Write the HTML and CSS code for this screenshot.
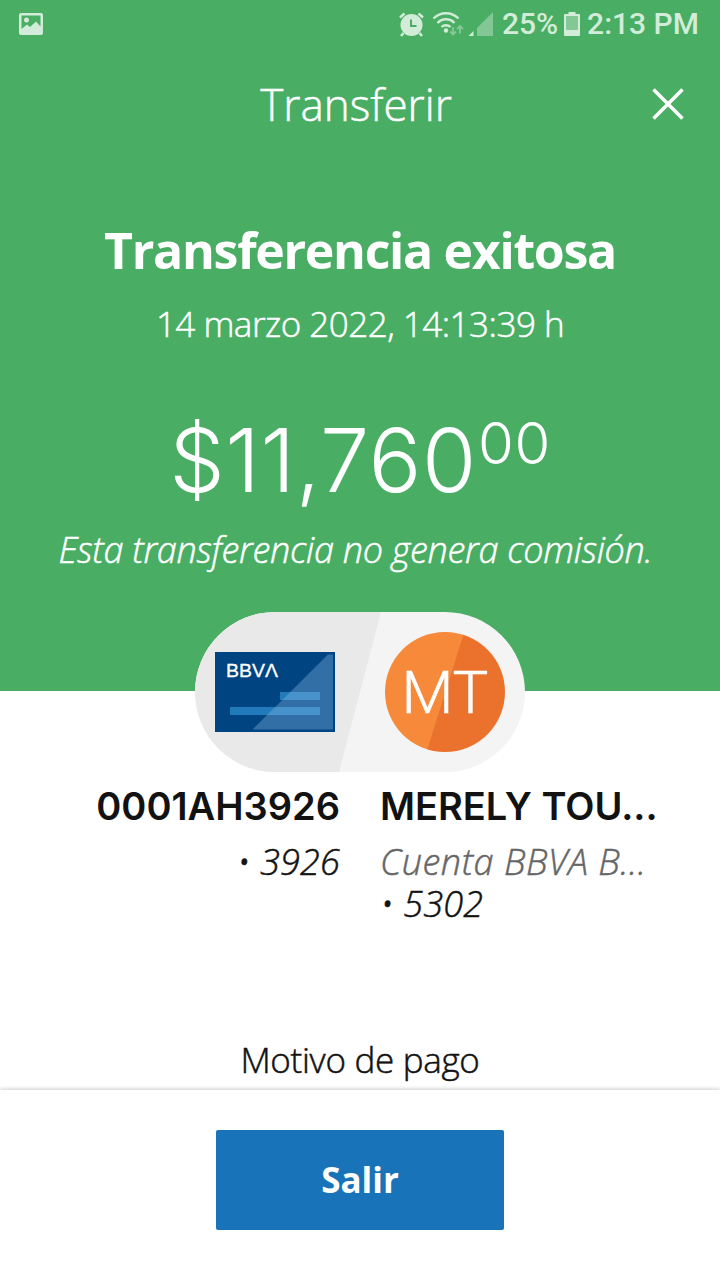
FILE: index.html
```html
<!DOCTYPE html>
<html lang="es">
  <head>
    <meta charset="UTF-8" />
    <meta name="viewport" content="width=device-width, initial-scale=1.0" />
    <title>Transferir</title>
    <link rel="stylesheet" href="styles.css">
  </head>
  <body>
    <div class="hero">
      <div class="status">
        <svg class="icon-picture" width="26" height="24" viewBox="0 0 26 24">
          <path fill-rule="evenodd" d="M2 1h20a2 2 0 0 1 2 2v18a2 2 0 0 1-2 2H2a2 2 0 0 1-2-2V3a2 2 0 0 1 2-2zM2.500 3.500v13.500l5.500-4.500 3 2.500 6-5.500 4.500 5V3.500z" />
          <circle cx="7.500" cy="8" r="2.500" />
        </svg>
        <div class="status-right">
          <svg class="icon-alarm" width="25" height="25" viewBox="0 0 25 25">
            <circle cx="12.500" cy="13" r="11" />
            <path class="cut" d="M12 7.500v6.500h5.500" />
            <path class="line" d="M1 5.500l4.500-4M24 5.500l-4.500-4M4.500 21l-2.500 3M20.500 21l2.500 3" />
          </svg>
          <svg class="icon-wifi" width="33" height="26" viewBox="0 0 33 26">
            <path class="arc" d="M1.500 7.500a17.500 17.500 0 0 1 25 0M5.500 12a11.500 11.500 0 0 1 17 0M9.500 16a6.500 6.500 0 0 1 9 0" />
            <circle cx="14" cy="19.500" r="2.200" />
            <path class="arrows" d="M21 16v7.500M18 20.500l3 3 3-3M28 22.500v-7.500M25 18l3-3 3 3" />
          </svg>
          <svg class="icon-signal" width="25" height="25" viewBox="0 0 25 25">
            <path class="faded" d="M9 24V16L25 0v24z" />
            <path d="M.5 24l5-5v5z" />
          </svg>
          <span class="battery-text">25%</span>
          <svg class="icon-battery" width="16" height="24" viewBox="0 0 16 24">
            <path class="faded" d="M2 4h12v14H2z" />
            <path fill-rule="evenodd" d="M4.500 0h7v2H15a1 1 0 0 1 1 1v20a1 1 0 0 1-1 1H1a1 1 0 0 1-1-1V3a1 1 0 0 1 1-1h3.500zM2 4v14h12V4z" />
          </svg>
          <span class="clock">2:13 PM</span>
        </div>
      </div>
      <div class="header">
        <span class="header-title">Transferir</span>
        <svg class="close" width="32" height="32" viewBox="0 0 32 32">
          <path d="M1.500 1.500l29 29M30.500 1.500l-29 29" />
        </svg>
      </div>
      <h1 class="title">Transferencia exitosa</h1>
      <p class="date">14 marzo 2022, 14:13:39 h</p>
      <div class="amount"><span class="amount-whole">$11,760</span><span class="cents">00</span></div>
      <p class="fee">Esta transferencia no genera comisión.</p>
    </div>

    <div class="pill">
      <svg class="card" width="120" height="80" viewBox="0 0 120 80">
        <rect width="120" height="80" fill="#004481" />
        <path d="M65 40h40v8H65zM15 55h90v8H15z" fill="#237aba" />
        <path d="M113 2.500h5v75H37.500z" fill="#89bde8" fill-opacity="0.36" />
        <text class="card-logo" x="11" y="25" textLength="52" lengthAdjust="spacingAndGlyphs">BBVΛ</text>
      </svg>
      <div class="avatar"><span class="initials">MT</span></div>
    </div>

    <div class="accounts">
      <div class="from">
        <div class="name name-from">0001AH3926</div>
        <div class="detail">• 3926</div>
      </div>
      <div class="to">
        <div class="name name-to">MERELY TOU...</div>
        <div class="detail bank">Cuenta BBVA B...</div>
        <div class="detail">• 5302</div>
      </div>
    </div>

    <p class="reason">Motivo de pago</p>

    <div class="footer">
      <button class="exit">Salir</button>
    </div>
  </body>
</html>
```
FILE: styles.css
```css
* {
  box-sizing: border-box;
}
body {
  margin: 0;
  width: 720px;
  height: 1280px;
  overflow: hidden;
  display: flex;
  flex-direction: column;
  background: #fff;
  color: #121212;
  font-family: "Open Sans", sans-serif;
  font-weight: 300;
  white-space: nowrap;
}
h1,
p {
  margin: 0;
}
.hero {
  height: 691px;
  flex-shrink: 0;
  background: #49ae64;
  color: #fff;
  text-align: center;
}
.status {
  display: flex;
  align-items: center;
  justify-content: space-between;
  height: 50px;
  padding: 0 21px 2px 19px;
  color: #d2ecd9;
  fill: #d2ecd9;
}
.status-right {
  display: flex;
  align-items: center;
  font: 500 30px/50px Roboto, sans-serif;
}
.icon-alarm .cut {
  fill: none;
  stroke: #49ae64;
  stroke-width: 2;
}
.icon-alarm .line {
  fill: none;
  stroke: #d2ecd9;
  stroke-width: 2.5;
}
.icon-wifi {
  margin-left: 8px;
}
.icon-wifi .arc {
  fill: none;
  stroke: #d2ecd9;
  stroke-width: 2.4;
}
.icon-wifi .arrows {
  fill: none;
  stroke: #86c998;
  stroke-width: 1.8;
}
.icon-signal {
  margin: 0 9px 0 3px;
}
.faded {
  fill: #82c795;
}
.icon-battery {
  margin: 0 7px 0 6px;
}
.header {
  display: grid;
  grid-template-columns: 1fr auto 1fr;
  align-items: center;
  height: 108px;
  padding: 0 36px;
}
.header-title {
  grid-column: 2;
  margin-right: 8px;
  font-size: 44px;
  line-height: 106px;
}
.close {
  justify-self: end;
  fill: none;
  stroke: #fff;
  stroke-width: 3.5;
}
.title {
  margin-top: 62px;
  font-size: 50px;
  line-height: 60px;
  font-weight: 700;
  letter-spacing: -1.3px;
}
.date {
  margin-top: 19px;
  font-size: 35px;
  line-height: 50px;
  letter-spacing: -0.5px;
}
.header-title,
.date,
.fee,
.detail,
.reason,
.initials {
  -webkit-text-stroke: 0.5px currentColor;
}
.amount {
  display: flex;
  justify-content: center;
  margin-top: 61px;
  font-family: Inter, sans-serif;
  font-weight: 300;
  font-size: 88px;
  line-height: 100px;
  letter-spacing: 0.6px;
}
.cents {
  margin-left: 1px;
  font-size: 58px;
  line-height: 66px;
}
.fee {
  margin: 15px 9px 0 0;
  font-size: 36px;
  line-height: 50px;
  font-style: italic;
  letter-spacing: -0.27px;
}
.pill {
  position: relative;
  display: flex;
  flex-shrink: 0;
  align-items: center;
  justify-content: space-between;
  align-self: center;
  width: 330px;
  height: 160px;
  margin-top: -79px;
  padding: 0 20px;
  border-radius: 80px;
  background: #f4f4f4;
  overflow: hidden;
}
.pill::before {
  content: "";
  position: absolute;
  inset: 0;
  background: #e9e9e9;
  clip-path: polygon(0 0, 186px 0, 144px 160px, 0 160px);
}
.card {
  position: relative;
}
.card-logo {
  fill: #fff;
  stroke: #fff;
  stroke-width: 0.3;
  font-family: "Liberation Sans", sans-serif;
  font-size: 18.5px;
}
.avatar {
  position: relative;
  width: 120px;
  height: 120px;
  border-radius: 50%;
  background: linear-gradient(107.5deg, #f7893b 50%, #ea722d 50.5%);
  color: #fff;
  text-align: center;
}
.initials {
  font-family: Roboto, sans-serif;
  font-size: 60px;
  line-height: 122px;
}
.accounts {
  display: grid;
  grid-template-columns: 340px 340px;
  column-gap: 40px;
  margin-top: 9px;
}
.from {
  text-align: right;
}
.name {
  font-family: Inter, sans-serif;
  font-size: 38px;
  line-height: 50px;
  font-weight: 600;
  margin-bottom: 10px;
}
.detail {
  font-size: 36px;
  line-height: 42px;
  font-style: italic;
  letter-spacing: 0.2px;
}
.bank {
  color: #666;
  letter-spacing: 0.5px;
}
.reason {
  margin-top: 110px;
  font-size: 35px;
  line-height: 50px;
  text-align: center;
  letter-spacing: -0.3px;
}
.footer {
  display: flex;
  justify-content: center;
  height: 190px;
  margin-top: auto;
  flex-shrink: 0;
  padding-top: 40px;
  background: #fff;
  box-shadow: 0 -1px 4px rgba(0, 0, 0, 0.2);
}
.exit {
  width: 288px;
  height: 100px;
  padding: 0 0 2px;
  border: 0;
  border-radius: 2px;
  background: #1973b8;
  color: #fff;
  font: 700 35px "Open Sans", sans-serif;
}
```
